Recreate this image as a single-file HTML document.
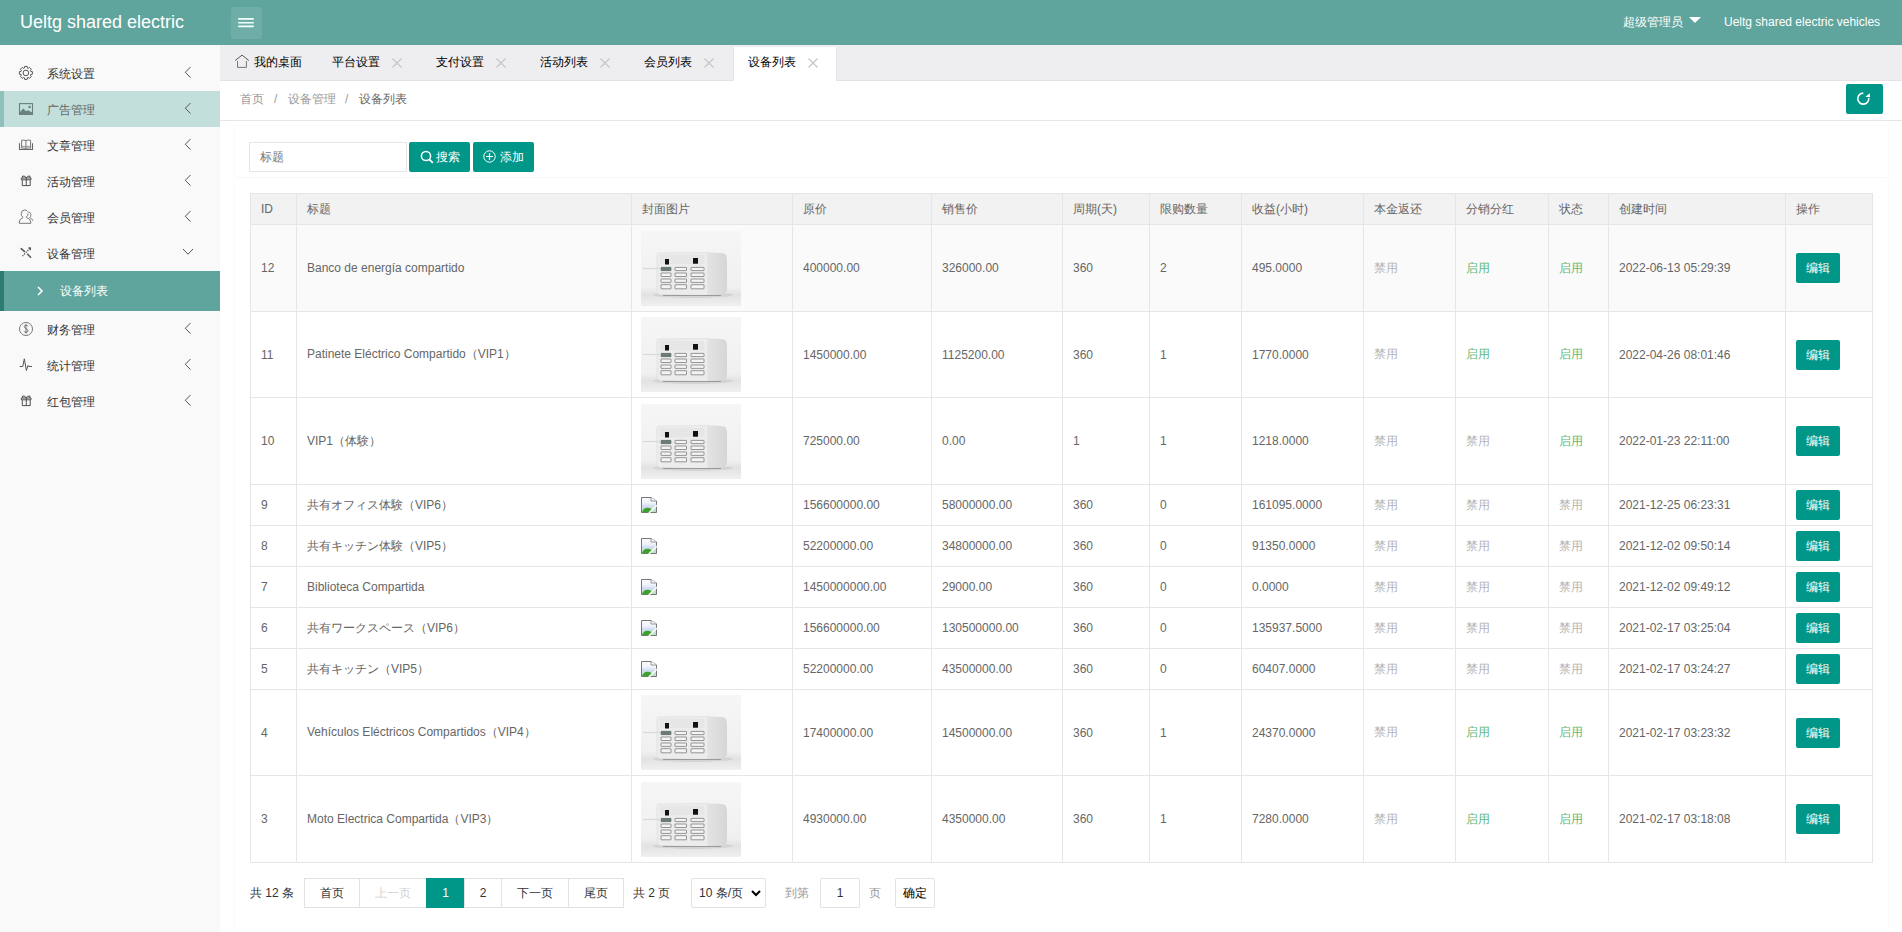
<!DOCTYPE html><html><head><meta charset="utf-8"><title>设备列表</title><style>
*{box-sizing:border-box;margin:0;padding:0}
html,body{width:1902px;height:932px;overflow:hidden;background:#fff;font-family:"Liberation Sans",sans-serif;font-size:12px;color:#666}
.abs{position:absolute}
#hdr{position:absolute;left:0;top:0;width:1902px;height:45px;background:#5fa59d}
#logo{position:absolute;left:20px;top:0;height:45px;line-height:44px;font-size:18px;color:#fff;white-space:nowrap}
#ham{position:absolute;left:231px;top:7px;width:31px;height:32px;background:rgba(255,255,255,.1);border-radius:3px}
#ham i{position:absolute;left:7px;width:16px;height:2px;background:#fff}
#uname{position:absolute;left:1623px;top:0;line-height:44px;color:#fff;font-size:12px;white-space:nowrap}
#caret{position:absolute;left:1689px;top:17px;width:0;height:0;border-left:6px solid transparent;border-right:6px solid transparent;border-top:6px solid #fff}
#site{position:absolute;left:1724px;top:0;line-height:44px;color:#fff;font-size:12px;white-space:nowrap}
#side{position:absolute;left:0;top:45px;width:220px;height:887px;background:#f9f9f9}
.mi{position:absolute;left:0;width:220px;height:36px;line-height:36px;color:#333;font-size:12px}
.mi .t{position:absolute;left:47px;top:1px}
.mi svg.ic{position:absolute;left:16px;top:8px}
.mi .chev{position:absolute;left:182px;top:0}
.mi.hov{background:#c2dfdb;color:#666}
.mi.hov:before{content:"";position:absolute;left:0;top:0;width:4px;height:36px;background:#8ec1bb}
.mi.act{background:#5fa59d;color:#fff;height:40px;line-height:40px}
.mi.act:before{content:"";position:absolute;left:0;top:0;width:4px;height:40px;background:#2e7b72}
#tabs{position:absolute;left:220px;top:45px;width:1682px;height:36px;background:#eeeef1;border-bottom:1px solid #e3e3e6}
.tab{position:absolute;top:2px;height:34px;line-height:30px;color:#000;font-size:12px;white-space:nowrap}
.tab.on{background:#fff;box-shadow:-1px 0 0 #e4e4e8,1px 0 0 #e4e4e8}
.tab .x{position:absolute;top:10.5px}
#bc{position:absolute;left:220px;top:81px;width:1682px;height:40px;background:#fff;border-bottom:1px solid #e6e6e6}
#bc span{position:absolute;top:0;line-height:37px;color:#999;white-space:nowrap}
#refresh{position:absolute;left:1846px;top:84px;width:37px;height:30px;background:#009688;border-radius:2px}
.card{position:absolute;left:235px;width:1653px;background:#fff;box-shadow:0 0 2px rgba(0,0,0,.05)}
#search{position:absolute;left:249px;top:142px;width:158px;height:30px;border:1px solid #e6e6e6;background:#fff}
#search span{position:absolute;left:10px;top:0;line-height:28px;color:#757575}
.btn{position:absolute;top:142px;height:30px;width:61px;background:#009688;border-radius:2px;color:#fff;line-height:30px;white-space:nowrap}
.btn svg{position:absolute;top:8px}
.btn span{position:absolute;top:0}
table#tb{position:absolute;left:250px;top:193px;border-collapse:collapse;table-layout:fixed;width:1623px}
#tb td,#tb th{border:1px solid #e6e6e6;padding:0 0 0 10px;font-weight:normal;text-align:left;color:#666;font-size:12px;white-space:nowrap;overflow:hidden;vertical-align:middle}
#tb th{background:#f2f2f2;height:31px}
#tb tr.hv td{background:#fafafa}
.dis{color:#b4b4b4 !important}
.en{color:#5fb878 !important}
.edit{display:inline-block;width:44px;height:30px;line-height:30px;text-align:center;background:#009688;color:#fff;border-radius:2px;margin-left:0}
#pg{position:absolute;left:250px;top:878px;height:30px;white-space:nowrap}
.pb{position:absolute;top:0;height:30px;line-height:28px;border:1px solid #e2e2e2;background:#fff;color:#333;text-align:center}
.pt{position:absolute;top:0;line-height:30px;color:#333}
</style></head><body>
<div id="hdr"><div id="logo">Ueltg shared electric</div>
<div id="ham"><svg class="abs" style="left:0;top:0" width="31" height="32" viewBox="0 0 31 32"><path d="M7.8 11.9 H22.2 M7.8 15.7 H22.2 M7.8 19.4 H22.2" stroke="#f4fffd" stroke-width="1.6" stroke-linecap="round"/></svg></div>
<div id="uname">超级管理员</div><div id="caret"></div><div id="site">Ueltg shared electric vehicles</div></div>
<div id="side">
<div class="mi " style="top:10px"><svg class="ic" style="top:7px" width="20" height="20" viewBox="0 0 20 20"><path d="M8.31 6.16 L8.64 4.42 L11.16 4.42 L11.49 6.16 L12.13 6.43 L13.59 5.43 L15.37 7.21 L14.37 8.67 L14.64 9.31 L16.38 9.64 L16.38 12.16 L14.64 12.49 L14.37 13.13 L15.37 14.59 L13.59 16.37 L12.13 15.37 L11.49 15.64 L11.16 17.38 L8.64 17.38 L8.31 15.64 L7.67 15.37 L6.21 16.37 L4.43 14.59 L5.43 13.13 L5.16 12.49 L3.42 12.16 L3.42 9.64 L5.16 9.31 L5.43 8.67 L4.43 7.21 L6.21 5.43 L7.67 6.43 Z" fill="none" stroke="#555" stroke-width="1" stroke-linejoin="round"/><circle cx="9.9" cy="10.9" r="2.8" fill="none" stroke="#555" stroke-width="1"/></svg><span class="t">系统设置</span><svg class="chev" width="10" height="36" viewBox="0 0 10 36"><path d="M8.5 12 L3.3 17.3 L8.5 22.6" fill="none" stroke="#555" stroke-width="1"/></svg></div>
<div class="mi hov" style="top:46px"><svg class="ic" width="20" height="20" viewBox="0 0 20 20"><rect x="3.5" y="4.6" width="13" height="10.8" fill="none" stroke="#6b7f7c" stroke-width="1.1"/><path d="M3.5 13.5 L7.3 9.6 L10 12.2 L12 11.2 L16.5 13.8 V15.4 H3.5 Z" fill="#6b7f7c"/><circle cx="13.6" cy="8" r="1.2" fill="#6b7f7c"/></svg><span class="t">广告管理</span><svg class="chev" width="10" height="36" viewBox="0 0 10 36"><path d="M8.5 12 L3.3 17.3 L8.5 22.6" fill="none" stroke="#555" stroke-width="1"/></svg></div>
<div class="mi " style="top:82px"><svg class="ic" width="20" height="20" viewBox="0 0 20 20"><path d="M3.5 8.2 V14.5 H16.5 V8.2" fill="none" stroke="#666" stroke-width="1.1"/><path d="M5.6 13.2 V5.3 Q7.8 4.6 9.9 5.6 V13.4 Q7.8 12.6 5.6 13.2 Z M9.9 5.6 Q12.2 4.6 14.6 5.3 V13.2 Q12.2 12.6 9.9 13.4" fill="none" stroke="#777" stroke-width="1"/><path d="M5.6 11.4 H14.6" stroke="#888" stroke-width="0.8"/></svg><span class="t">文章管理</span><svg class="chev" width="10" height="36" viewBox="0 0 10 36"><path d="M8.5 12 L3.3 17.3 L8.5 22.6" fill="none" stroke="#555" stroke-width="1"/></svg></div>
<div class="mi " style="top:118px"><svg class="ic" width="20" height="20" viewBox="0 0 20 20"><path d="M6.3 9.2 V14.6 H14.2 V9.2 M5.3 7 H15 V8.8 H5.3 Z M10.25 7 V14.6 M10.2 7 Q9.5 4.6 6.6 5 Q6 6.2 7 7 M10.3 7 Q11 4.6 13.9 5 Q14.5 6.2 13.5 7" fill="none" stroke="#444" stroke-width="0.95"/></svg><span class="t">活动管理</span><svg class="chev" width="10" height="36" viewBox="0 0 10 36"><path d="M8.5 12 L3.3 17.3 L8.5 22.6" fill="none" stroke="#555" stroke-width="1"/></svg></div>
<div class="mi " style="top:154px"><svg class="ic" width="20" height="20" viewBox="0 0 20 20"><path d="M7 10.3 Q5 8.8 5.2 6.6 Q5.5 3 8.7 3 Q10.4 3 11.4 4.2 M10 10.3 Q12.2 8.8 12 6.6" fill="none" stroke="#777" stroke-width="1"/><path d="M7 10.5 Q3.3 12 3.3 15.2 V16.3 H14.8 V15.2 Q14.8 12 10.5 10.5" fill="none" stroke="#777" stroke-width="1"/><path d="M11.8 5.2 Q13 4.8 14 5.6 Q15.4 7 14.8 9 Q14.4 10 13.6 10.6 Q16.3 11.5 17 14" fill="none" stroke="#888" stroke-width="1"/></svg><span class="t">会员管理</span><svg class="chev" width="10" height="36" viewBox="0 0 10 36"><path d="M8.5 12 L3.3 17.3 L8.5 22.6" fill="none" stroke="#555" stroke-width="1"/></svg></div>
<div class="mi open" style="top:190px"><svg class="ic" width="20" height="20" viewBox="0 0 20 20"><path d="M5.2 5.6 L8.4 8.4 M11.6 11.2 L14.6 14.2" stroke="#555" stroke-width="1.5" stroke-linecap="round"/><path d="M14 5.2 L6 13.6" stroke="#666" stroke-width="1.3" stroke-dasharray="1.4 1"/><path d="M12.2 5 L14.4 4.8 L14.4 7.2" fill="none" stroke="#555" stroke-width="1.2"/></svg><span class="t">设备管理</span><svg class="chev" width="12" height="36" viewBox="0 0 12 36"><path d="M1 14 L6 19.2 L11 14" fill="none" stroke="#555" stroke-width="1"/></svg></div>
<div class="mi act" style="top:226px"><svg class="abs" style="left:36px;top:15px" width="8" height="10" viewBox="0 0 8 10"><path d="M2 1 L6 5 L2 9" fill="none" stroke="#fff" stroke-width="1.6"/></svg><span class="t" style="left:60px;top:0">设备列表</span></div>
<div class="mi " style="top:266px"><svg class="ic" width="20" height="20" viewBox="0 0 20 20"><circle cx="10" cy="10" r="6.5" fill="none" stroke="#777" stroke-width="1"/><path d="M11.9 7.4 Q11.4 6.2 10 6.2 Q8.2 6.2 8.2 7.6 Q8.2 8.8 10 9.6 Q11.9 10.4 11.9 11.8 Q11.9 13.4 10 13.4 Q8.4 13.4 8 12.2 M10 5.2 V14.6" fill="none" stroke="#666" stroke-width="0.9"/></svg><span class="t">财务管理</span><svg class="chev" width="10" height="36" viewBox="0 0 10 36"><path d="M8.5 12 L3.3 17.3 L8.5 22.6" fill="none" stroke="#555" stroke-width="1"/></svg></div>
<div class="mi " style="top:302px"><svg class="ic" width="20" height="20" viewBox="0 0 20 20"><path d="M3.7 11.5 H6.8 L8.3 3.8 L10.4 15.5 L11.9 10.5 L13 11.5 H16" fill="none" stroke="#555" stroke-width="1" stroke-linejoin="round"/></svg><span class="t">统计管理</span><svg class="chev" width="10" height="36" viewBox="0 0 10 36"><path d="M8.5 12 L3.3 17.3 L8.5 22.6" fill="none" stroke="#555" stroke-width="1"/></svg></div>
<div class="mi " style="top:338px"><svg class="ic" width="20" height="20" viewBox="0 0 20 20"><path d="M6.3 9.2 V14.6 H14.2 V9.2 M5.3 7 H15 V8.8 H5.3 Z M10.25 7 V14.6 M10.2 7 Q9.5 4.6 6.6 5 Q6 6.2 7 7 M10.3 7 Q11 4.6 13.9 5 Q14.5 6.2 13.5 7" fill="none" stroke="#444" stroke-width="0.95"/></svg><span class="t">红包管理</span><svg class="chev" width="10" height="36" viewBox="0 0 10 36"><path d="M8.5 12 L3.3 17.3 L8.5 22.6" fill="none" stroke="#555" stroke-width="1"/></svg></div>
</div>
<div id="tabs">
<div class="tab" style="left:0;width:97px"><svg class="abs" style="left:10px;top:3px" width="30" height="25" viewBox="0 0 30 25"><path d="M5.2 10.5 L12.07 5.1 L18.8 10.5" fill="none" stroke="#555" stroke-width="1"/><path d="M7.5 11 V17.4 H16.4 V11" fill="none" stroke="#777" stroke-width="1"/></svg><span class="abs" style="left:34px;top:0">我的桌面</span></div>
<div class="tab" style="left:97px;width:104px"><span class="abs" style="left:15px;top:0">平台设置</span><svg class="x" style="left:75px" width="10" height="10" viewBox="0 0 10 10"><path d="M0.5 0.5 L9.5 9.5 M9.5 0.5 L0.5 9.5" stroke="#c8c8c8" stroke-width="1.4"/></svg></div>
<div class="tab" style="left:201px;width:104px"><span class="abs" style="left:15px;top:0">支付设置</span><svg class="x" style="left:75px" width="10" height="10" viewBox="0 0 10 10"><path d="M0.5 0.5 L9.5 9.5 M9.5 0.5 L0.5 9.5" stroke="#c8c8c8" stroke-width="1.4"/></svg></div>
<div class="tab" style="left:305px;width:104px"><span class="abs" style="left:15px;top:0">活动列表</span><svg class="x" style="left:75px" width="10" height="10" viewBox="0 0 10 10"><path d="M0.5 0.5 L9.5 9.5 M9.5 0.5 L0.5 9.5" stroke="#c8c8c8" stroke-width="1.4"/></svg></div>
<div class="tab" style="left:409px;width:104px"><span class="abs" style="left:15px;top:0">会员列表</span><svg class="x" style="left:75px" width="10" height="10" viewBox="0 0 10 10"><path d="M0.5 0.5 L9.5 9.5 M9.5 0.5 L0.5 9.5" stroke="#c8c8c8" stroke-width="1.4"/></svg></div>
<div class="tab on" style="left:514px;width:102px"><span class="abs" style="left:14px;top:0">设备列表</span><svg class="x" style="left:74px" width="10" height="10" viewBox="0 0 10 10"><path d="M0.5 0.5 L9.5 9.5 M9.5 0.5 L0.5 9.5" stroke="#c8c8c8" stroke-width="1.4"/></svg></div>
</div>
<div id="bc"><span style="left:20px">首页</span><span style="left:54px">/</span><span style="left:68px">设备管理</span><span style="left:125px">/</span><span style="left:139px;color:#666">设备列表</span></div>
<div id="refresh"><svg class="abs" style="left:0;top:0" width="37" height="30" viewBox="0 0 37 30"><path d="M17.26 9.17 A5.5 5.5 0 1 0 22.7 13.8" fill="none" stroke="#fff" stroke-width="1.6"/><path d="M19.3 12.9 L23.6 9.2 L24.1 12.9 Z" fill="#fff"/></svg></div>
<div class="card" style="top:126px;height:51px"></div>
<div class="card" style="top:178px;height:754px"></div>
<div id="search"><span>标题</span></div>
<div class="btn" style="left:409px"><svg style="left:11px" width="14" height="14" viewBox="0 0 14 14"><circle cx="6" cy="6" r="4.6" fill="none" stroke="#fff" stroke-width="1.5"/><path d="M9.3 9.3 L12.8 12.8" stroke="#fff" stroke-width="1.8"/></svg><span style="left:27px">搜索</span></div>
<div class="btn" style="left:473px"><svg style="left:10px" width="13" height="13" viewBox="0 0 13 13"><circle cx="6.5" cy="6.5" r="5.7" fill="none" stroke="#fff" stroke-width="1"/><path d="M6.5 3 V10 M3 6.5 H10" stroke="#fff" stroke-width="1.2"/></svg><span style="left:27px">添加</span></div>
<table id="tb"><colgroup><col style="width:46px"><col style="width:335px"><col style="width:161px"><col style="width:139px"><col style="width:131px"><col style="width:87px"><col style="width:92px"><col style="width:122px"><col style="width:92px"><col style="width:93px"><col style="width:60px"><col style="width:177px"><col style="width:87px"></colgroup>
<tr><th>ID</th><th>标题</th><th>封面图片</th><th>原价</th><th>销售价</th><th>周期(天)</th><th>限购数量</th><th>收益(小时)</th><th>本金返还</th><th>分销分红</th><th>状态</th><th>创建时间</th><th>操作</th></tr>
<tr class="hv" style="height:87px"><td>12</td><td>Banco de energía compartido</td><td style="padding-left:9px"><svg width="100" height="75" viewBox="0 0 100 75" style="display:block"><defs><linearGradient id="mg" x1="0" y1="0" x2="0" y2="1"><stop offset="0" stop-color="#f6f6f6"/><stop offset="0.75" stop-color="#f0f0f0"/><stop offset="0.85" stop-color="#e2e2e2"/><stop offset="1" stop-color="#f0f0f0"/></linearGradient><linearGradient id="ms" x1="0" y1="0" x2="1" y2="0"><stop offset="0" stop-color="#e4e4e4"/><stop offset="1" stop-color="#d6d6d6"/></linearGradient></defs><rect width="100" height="75" fill="url(#mg)"/><ellipse cx="52" cy="64" rx="40" ry="3" fill="#d0d0d0" opacity="0.8"/><path d="M65 21.5 Q82 21 84 23 Q86 25 86 30 V58 Q86 62 82 63 L65 64 Z" fill="url(#ms)"/><path d="M18 22 Q16 22 16 25 V60 Q16 63 19 63.5 L65 64.5 L67 64 V21.5 Z" fill="#ececec" stroke="#dcdcdc" stroke-width="0.6"/><rect x="19" y="24" width="44" height="9" fill="#e6e6e6"/><rect x="24" y="28" width="4" height="5.5" fill="#111"/><rect x="52" y="27" width="5" height="5.7" fill="#111"/><rect x="20.0" y="36.4" width="10.0" height="3.2" rx="0.3" fill="#f4f4f4" stroke="#7d7d7d" stroke-width="0.8"/><rect x="20.0" y="42.0" width="10.0" height="3.5" rx="0.3" fill="#f4f4f4" stroke="#7d7d7d" stroke-width="0.8"/><rect x="20.0" y="48.0" width="10.0" height="3.4" rx="0.3" fill="#f4f4f4" stroke="#7d7d7d" stroke-width="0.8"/><rect x="20.0" y="53.7" width="10.0" height="4.1" rx="0.3" fill="#f4f4f4" stroke="#7d7d7d" stroke-width="0.8"/><rect x="34.0" y="36.4" width="11.5" height="3.2" rx="0.3" fill="#f4f4f4" stroke="#7d7d7d" stroke-width="0.8"/><rect x="34.0" y="42.0" width="11.5" height="3.5" rx="0.3" fill="#f4f4f4" stroke="#7d7d7d" stroke-width="0.8"/><rect x="34.0" y="48.0" width="11.5" height="3.4" rx="0.3" fill="#f4f4f4" stroke="#7d7d7d" stroke-width="0.8"/><rect x="34.0" y="53.7" width="11.5" height="4.1" rx="0.3" fill="#f4f4f4" stroke="#7d7d7d" stroke-width="0.8"/><rect x="50.0" y="36.4" width="13.0" height="3.2" rx="0.3" fill="#f4f4f4" stroke="#7d7d7d" stroke-width="0.8"/><rect x="50.0" y="42.0" width="13.0" height="3.5" rx="0.3" fill="#f4f4f4" stroke="#7d7d7d" stroke-width="0.8"/><rect x="50.0" y="48.0" width="13.0" height="3.4" rx="0.3" fill="#f4f4f4" stroke="#7d7d7d" stroke-width="0.8"/><rect x="50.0" y="53.7" width="13.0" height="4.1" rx="0.3" fill="#f4f4f4" stroke="#7d7d7d" stroke-width="0.8"/><rect x="20" y="36" width="10" height="4" fill="#6d7b76"/><path d="M2 37.5 H20" stroke="#d9d9d9" stroke-width="1.2"/><path d="M22 64.5 H80" stroke="#9a9a9a" stroke-width="1.2"/></svg></td><td>400000.00</td><td>326000.00</td><td>360</td><td>2</td><td>495.0000</td><td class="dis">禁用</td><td class="en">启用</td><td class="en">启用</td><td>2022-06-13 05:29:39</td><td><span class="edit">编辑</span></td></tr>
<tr style="height:86px"><td>11</td><td>Patinete Eléctrico Compartido（VIP1）</td><td style="padding-left:9px"><svg width="100" height="75" viewBox="0 0 100 75" style="display:block"><defs><linearGradient id="mg" x1="0" y1="0" x2="0" y2="1"><stop offset="0" stop-color="#f6f6f6"/><stop offset="0.75" stop-color="#f0f0f0"/><stop offset="0.85" stop-color="#e2e2e2"/><stop offset="1" stop-color="#f0f0f0"/></linearGradient><linearGradient id="ms" x1="0" y1="0" x2="1" y2="0"><stop offset="0" stop-color="#e4e4e4"/><stop offset="1" stop-color="#d6d6d6"/></linearGradient></defs><rect width="100" height="75" fill="url(#mg)"/><ellipse cx="52" cy="64" rx="40" ry="3" fill="#d0d0d0" opacity="0.8"/><path d="M65 21.5 Q82 21 84 23 Q86 25 86 30 V58 Q86 62 82 63 L65 64 Z" fill="url(#ms)"/><path d="M18 22 Q16 22 16 25 V60 Q16 63 19 63.5 L65 64.5 L67 64 V21.5 Z" fill="#ececec" stroke="#dcdcdc" stroke-width="0.6"/><rect x="19" y="24" width="44" height="9" fill="#e6e6e6"/><rect x="24" y="28" width="4" height="5.5" fill="#111"/><rect x="52" y="27" width="5" height="5.7" fill="#111"/><rect x="20.0" y="36.4" width="10.0" height="3.2" rx="0.3" fill="#f4f4f4" stroke="#7d7d7d" stroke-width="0.8"/><rect x="20.0" y="42.0" width="10.0" height="3.5" rx="0.3" fill="#f4f4f4" stroke="#7d7d7d" stroke-width="0.8"/><rect x="20.0" y="48.0" width="10.0" height="3.4" rx="0.3" fill="#f4f4f4" stroke="#7d7d7d" stroke-width="0.8"/><rect x="20.0" y="53.7" width="10.0" height="4.1" rx="0.3" fill="#f4f4f4" stroke="#7d7d7d" stroke-width="0.8"/><rect x="34.0" y="36.4" width="11.5" height="3.2" rx="0.3" fill="#f4f4f4" stroke="#7d7d7d" stroke-width="0.8"/><rect x="34.0" y="42.0" width="11.5" height="3.5" rx="0.3" fill="#f4f4f4" stroke="#7d7d7d" stroke-width="0.8"/><rect x="34.0" y="48.0" width="11.5" height="3.4" rx="0.3" fill="#f4f4f4" stroke="#7d7d7d" stroke-width="0.8"/><rect x="34.0" y="53.7" width="11.5" height="4.1" rx="0.3" fill="#f4f4f4" stroke="#7d7d7d" stroke-width="0.8"/><rect x="50.0" y="36.4" width="13.0" height="3.2" rx="0.3" fill="#f4f4f4" stroke="#7d7d7d" stroke-width="0.8"/><rect x="50.0" y="42.0" width="13.0" height="3.5" rx="0.3" fill="#f4f4f4" stroke="#7d7d7d" stroke-width="0.8"/><rect x="50.0" y="48.0" width="13.0" height="3.4" rx="0.3" fill="#f4f4f4" stroke="#7d7d7d" stroke-width="0.8"/><rect x="50.0" y="53.7" width="13.0" height="4.1" rx="0.3" fill="#f4f4f4" stroke="#7d7d7d" stroke-width="0.8"/><rect x="20" y="36" width="10" height="4" fill="#6d7b76"/><path d="M2 37.5 H20" stroke="#d9d9d9" stroke-width="1.2"/><path d="M22 64.5 H80" stroke="#9a9a9a" stroke-width="1.2"/></svg></td><td>1450000.00</td><td>1125200.00</td><td>360</td><td>1</td><td>1770.0000</td><td class="dis">禁用</td><td class="en">启用</td><td class="en">启用</td><td>2022-04-26 08:01:46</td><td><span class="edit">编辑</span></td></tr>
<tr style="height:87px"><td>10</td><td>VIP1（体験）</td><td style="padding-left:9px"><svg width="100" height="75" viewBox="0 0 100 75" style="display:block"><defs><linearGradient id="mg" x1="0" y1="0" x2="0" y2="1"><stop offset="0" stop-color="#f6f6f6"/><stop offset="0.75" stop-color="#f0f0f0"/><stop offset="0.85" stop-color="#e2e2e2"/><stop offset="1" stop-color="#f0f0f0"/></linearGradient><linearGradient id="ms" x1="0" y1="0" x2="1" y2="0"><stop offset="0" stop-color="#e4e4e4"/><stop offset="1" stop-color="#d6d6d6"/></linearGradient></defs><rect width="100" height="75" fill="url(#mg)"/><ellipse cx="52" cy="64" rx="40" ry="3" fill="#d0d0d0" opacity="0.8"/><path d="M65 21.5 Q82 21 84 23 Q86 25 86 30 V58 Q86 62 82 63 L65 64 Z" fill="url(#ms)"/><path d="M18 22 Q16 22 16 25 V60 Q16 63 19 63.5 L65 64.5 L67 64 V21.5 Z" fill="#ececec" stroke="#dcdcdc" stroke-width="0.6"/><rect x="19" y="24" width="44" height="9" fill="#e6e6e6"/><rect x="24" y="28" width="4" height="5.5" fill="#111"/><rect x="52" y="27" width="5" height="5.7" fill="#111"/><rect x="20.0" y="36.4" width="10.0" height="3.2" rx="0.3" fill="#f4f4f4" stroke="#7d7d7d" stroke-width="0.8"/><rect x="20.0" y="42.0" width="10.0" height="3.5" rx="0.3" fill="#f4f4f4" stroke="#7d7d7d" stroke-width="0.8"/><rect x="20.0" y="48.0" width="10.0" height="3.4" rx="0.3" fill="#f4f4f4" stroke="#7d7d7d" stroke-width="0.8"/><rect x="20.0" y="53.7" width="10.0" height="4.1" rx="0.3" fill="#f4f4f4" stroke="#7d7d7d" stroke-width="0.8"/><rect x="34.0" y="36.4" width="11.5" height="3.2" rx="0.3" fill="#f4f4f4" stroke="#7d7d7d" stroke-width="0.8"/><rect x="34.0" y="42.0" width="11.5" height="3.5" rx="0.3" fill="#f4f4f4" stroke="#7d7d7d" stroke-width="0.8"/><rect x="34.0" y="48.0" width="11.5" height="3.4" rx="0.3" fill="#f4f4f4" stroke="#7d7d7d" stroke-width="0.8"/><rect x="34.0" y="53.7" width="11.5" height="4.1" rx="0.3" fill="#f4f4f4" stroke="#7d7d7d" stroke-width="0.8"/><rect x="50.0" y="36.4" width="13.0" height="3.2" rx="0.3" fill="#f4f4f4" stroke="#7d7d7d" stroke-width="0.8"/><rect x="50.0" y="42.0" width="13.0" height="3.5" rx="0.3" fill="#f4f4f4" stroke="#7d7d7d" stroke-width="0.8"/><rect x="50.0" y="48.0" width="13.0" height="3.4" rx="0.3" fill="#f4f4f4" stroke="#7d7d7d" stroke-width="0.8"/><rect x="50.0" y="53.7" width="13.0" height="4.1" rx="0.3" fill="#f4f4f4" stroke="#7d7d7d" stroke-width="0.8"/><rect x="20" y="36" width="10" height="4" fill="#6d7b76"/><path d="M2 37.5 H20" stroke="#d9d9d9" stroke-width="1.2"/><path d="M22 64.5 H80" stroke="#9a9a9a" stroke-width="1.2"/></svg></td><td>725000.00</td><td>0.00</td><td>1</td><td>1</td><td>1218.0000</td><td class="dis">禁用</td><td class="dis">禁用</td><td class="en">启用</td><td>2022-01-23 22:11:00</td><td><span class="edit">编辑</span></td></tr>
<tr style="height:41px"><td>9</td><td>共有オフィス体験（VIP6）</td><td style="padding-left:9px"><svg width="16" height="16" viewBox="0 0 16 16" style="display:block"><defs><linearGradient id="bgr" x1="0" y1="0" x2="0" y2="1"><stop offset="0" stop-color="#fbfbff"/><stop offset="0.35" stop-color="#f2f4fb"/><stop offset="0.6" stop-color="#cfdcf2"/><stop offset="1" stop-color="#b9e0c0"/></linearGradient></defs><path d="M0.5 0.5 H10 L15.5 4 V15.5 H0.5 Z" fill="url(#bgr)" stroke="#777" stroke-width="1"/><path d="M10 0.5 V4 H15.5" fill="#fff" stroke="#888" stroke-width="0.9"/><path d="M1 15.2 Q2.5 10 7.5 10.8 Q10 11.3 11 12.5 L8.5 15.2 Z" fill="#3fa02e"/><path d="M7.8 16 L16 8.2" stroke="#f2fff0" stroke-width="1.6"/></svg></td><td>156600000.00</td><td>58000000.00</td><td>360</td><td>0</td><td>161095.0000</td><td class="dis">禁用</td><td class="dis">禁用</td><td class="dis">禁用</td><td>2021-12-25 06:23:31</td><td><span class="edit">编辑</span></td></tr>
<tr style="height:41px"><td>8</td><td>共有キッチン体験（VIP5）</td><td style="padding-left:9px"><svg width="16" height="16" viewBox="0 0 16 16" style="display:block"><defs><linearGradient id="bgr" x1="0" y1="0" x2="0" y2="1"><stop offset="0" stop-color="#fbfbff"/><stop offset="0.35" stop-color="#f2f4fb"/><stop offset="0.6" stop-color="#cfdcf2"/><stop offset="1" stop-color="#b9e0c0"/></linearGradient></defs><path d="M0.5 0.5 H10 L15.5 4 V15.5 H0.5 Z" fill="url(#bgr)" stroke="#777" stroke-width="1"/><path d="M10 0.5 V4 H15.5" fill="#fff" stroke="#888" stroke-width="0.9"/><path d="M1 15.2 Q2.5 10 7.5 10.8 Q10 11.3 11 12.5 L8.5 15.2 Z" fill="#3fa02e"/><path d="M7.8 16 L16 8.2" stroke="#f2fff0" stroke-width="1.6"/></svg></td><td>52200000.00</td><td>34800000.00</td><td>360</td><td>0</td><td>91350.0000</td><td class="dis">禁用</td><td class="dis">禁用</td><td class="dis">禁用</td><td>2021-12-02 09:50:14</td><td><span class="edit">编辑</span></td></tr>
<tr style="height:41px"><td>7</td><td>Biblioteca Compartida</td><td style="padding-left:9px"><svg width="16" height="16" viewBox="0 0 16 16" style="display:block"><defs><linearGradient id="bgr" x1="0" y1="0" x2="0" y2="1"><stop offset="0" stop-color="#fbfbff"/><stop offset="0.35" stop-color="#f2f4fb"/><stop offset="0.6" stop-color="#cfdcf2"/><stop offset="1" stop-color="#b9e0c0"/></linearGradient></defs><path d="M0.5 0.5 H10 L15.5 4 V15.5 H0.5 Z" fill="url(#bgr)" stroke="#777" stroke-width="1"/><path d="M10 0.5 V4 H15.5" fill="#fff" stroke="#888" stroke-width="0.9"/><path d="M1 15.2 Q2.5 10 7.5 10.8 Q10 11.3 11 12.5 L8.5 15.2 Z" fill="#3fa02e"/><path d="M7.8 16 L16 8.2" stroke="#f2fff0" stroke-width="1.6"/></svg></td><td>1450000000.00</td><td>29000.00</td><td>360</td><td>0</td><td>0.0000</td><td class="dis">禁用</td><td class="dis">禁用</td><td class="dis">禁用</td><td>2021-12-02 09:49:12</td><td><span class="edit">编辑</span></td></tr>
<tr style="height:41px"><td>6</td><td>共有ワークスペース（VIP6）</td><td style="padding-left:9px"><svg width="16" height="16" viewBox="0 0 16 16" style="display:block"><defs><linearGradient id="bgr" x1="0" y1="0" x2="0" y2="1"><stop offset="0" stop-color="#fbfbff"/><stop offset="0.35" stop-color="#f2f4fb"/><stop offset="0.6" stop-color="#cfdcf2"/><stop offset="1" stop-color="#b9e0c0"/></linearGradient></defs><path d="M0.5 0.5 H10 L15.5 4 V15.5 H0.5 Z" fill="url(#bgr)" stroke="#777" stroke-width="1"/><path d="M10 0.5 V4 H15.5" fill="#fff" stroke="#888" stroke-width="0.9"/><path d="M1 15.2 Q2.5 10 7.5 10.8 Q10 11.3 11 12.5 L8.5 15.2 Z" fill="#3fa02e"/><path d="M7.8 16 L16 8.2" stroke="#f2fff0" stroke-width="1.6"/></svg></td><td>156600000.00</td><td>130500000.00</td><td>360</td><td>0</td><td>135937.5000</td><td class="dis">禁用</td><td class="dis">禁用</td><td class="dis">禁用</td><td>2021-02-17 03:25:04</td><td><span class="edit">编辑</span></td></tr>
<tr style="height:41px"><td>5</td><td>共有キッチン（VIP5）</td><td style="padding-left:9px"><svg width="16" height="16" viewBox="0 0 16 16" style="display:block"><defs><linearGradient id="bgr" x1="0" y1="0" x2="0" y2="1"><stop offset="0" stop-color="#fbfbff"/><stop offset="0.35" stop-color="#f2f4fb"/><stop offset="0.6" stop-color="#cfdcf2"/><stop offset="1" stop-color="#b9e0c0"/></linearGradient></defs><path d="M0.5 0.5 H10 L15.5 4 V15.5 H0.5 Z" fill="url(#bgr)" stroke="#777" stroke-width="1"/><path d="M10 0.5 V4 H15.5" fill="#fff" stroke="#888" stroke-width="0.9"/><path d="M1 15.2 Q2.5 10 7.5 10.8 Q10 11.3 11 12.5 L8.5 15.2 Z" fill="#3fa02e"/><path d="M7.8 16 L16 8.2" stroke="#f2fff0" stroke-width="1.6"/></svg></td><td>52200000.00</td><td>43500000.00</td><td>360</td><td>0</td><td>60407.0000</td><td class="dis">禁用</td><td class="dis">禁用</td><td class="dis">禁用</td><td>2021-02-17 03:24:27</td><td><span class="edit">编辑</span></td></tr>
<tr style="height:86px"><td>4</td><td>Vehículos Eléctricos Compartidos（VIP4）</td><td style="padding-left:9px"><svg width="100" height="75" viewBox="0 0 100 75" style="display:block"><defs><linearGradient id="mg" x1="0" y1="0" x2="0" y2="1"><stop offset="0" stop-color="#f6f6f6"/><stop offset="0.75" stop-color="#f0f0f0"/><stop offset="0.85" stop-color="#e2e2e2"/><stop offset="1" stop-color="#f0f0f0"/></linearGradient><linearGradient id="ms" x1="0" y1="0" x2="1" y2="0"><stop offset="0" stop-color="#e4e4e4"/><stop offset="1" stop-color="#d6d6d6"/></linearGradient></defs><rect width="100" height="75" fill="url(#mg)"/><ellipse cx="52" cy="64" rx="40" ry="3" fill="#d0d0d0" opacity="0.8"/><path d="M65 21.5 Q82 21 84 23 Q86 25 86 30 V58 Q86 62 82 63 L65 64 Z" fill="url(#ms)"/><path d="M18 22 Q16 22 16 25 V60 Q16 63 19 63.5 L65 64.5 L67 64 V21.5 Z" fill="#ececec" stroke="#dcdcdc" stroke-width="0.6"/><rect x="19" y="24" width="44" height="9" fill="#e6e6e6"/><rect x="24" y="28" width="4" height="5.5" fill="#111"/><rect x="52" y="27" width="5" height="5.7" fill="#111"/><rect x="20.0" y="36.4" width="10.0" height="3.2" rx="0.3" fill="#f4f4f4" stroke="#7d7d7d" stroke-width="0.8"/><rect x="20.0" y="42.0" width="10.0" height="3.5" rx="0.3" fill="#f4f4f4" stroke="#7d7d7d" stroke-width="0.8"/><rect x="20.0" y="48.0" width="10.0" height="3.4" rx="0.3" fill="#f4f4f4" stroke="#7d7d7d" stroke-width="0.8"/><rect x="20.0" y="53.7" width="10.0" height="4.1" rx="0.3" fill="#f4f4f4" stroke="#7d7d7d" stroke-width="0.8"/><rect x="34.0" y="36.4" width="11.5" height="3.2" rx="0.3" fill="#f4f4f4" stroke="#7d7d7d" stroke-width="0.8"/><rect x="34.0" y="42.0" width="11.5" height="3.5" rx="0.3" fill="#f4f4f4" stroke="#7d7d7d" stroke-width="0.8"/><rect x="34.0" y="48.0" width="11.5" height="3.4" rx="0.3" fill="#f4f4f4" stroke="#7d7d7d" stroke-width="0.8"/><rect x="34.0" y="53.7" width="11.5" height="4.1" rx="0.3" fill="#f4f4f4" stroke="#7d7d7d" stroke-width="0.8"/><rect x="50.0" y="36.4" width="13.0" height="3.2" rx="0.3" fill="#f4f4f4" stroke="#7d7d7d" stroke-width="0.8"/><rect x="50.0" y="42.0" width="13.0" height="3.5" rx="0.3" fill="#f4f4f4" stroke="#7d7d7d" stroke-width="0.8"/><rect x="50.0" y="48.0" width="13.0" height="3.4" rx="0.3" fill="#f4f4f4" stroke="#7d7d7d" stroke-width="0.8"/><rect x="50.0" y="53.7" width="13.0" height="4.1" rx="0.3" fill="#f4f4f4" stroke="#7d7d7d" stroke-width="0.8"/><rect x="20" y="36" width="10" height="4" fill="#6d7b76"/><path d="M2 37.5 H20" stroke="#d9d9d9" stroke-width="1.2"/><path d="M22 64.5 H80" stroke="#9a9a9a" stroke-width="1.2"/></svg></td><td>17400000.00</td><td>14500000.00</td><td>360</td><td>1</td><td>24370.0000</td><td class="dis">禁用</td><td class="en">启用</td><td class="en">启用</td><td>2021-02-17 03:23:32</td><td><span class="edit">编辑</span></td></tr>
<tr style="height:87px"><td>3</td><td>Moto Electrica Compartida（VIP3）</td><td style="padding-left:9px"><svg width="100" height="75" viewBox="0 0 100 75" style="display:block"><defs><linearGradient id="mg" x1="0" y1="0" x2="0" y2="1"><stop offset="0" stop-color="#f6f6f6"/><stop offset="0.75" stop-color="#f0f0f0"/><stop offset="0.85" stop-color="#e2e2e2"/><stop offset="1" stop-color="#f0f0f0"/></linearGradient><linearGradient id="ms" x1="0" y1="0" x2="1" y2="0"><stop offset="0" stop-color="#e4e4e4"/><stop offset="1" stop-color="#d6d6d6"/></linearGradient></defs><rect width="100" height="75" fill="url(#mg)"/><ellipse cx="52" cy="64" rx="40" ry="3" fill="#d0d0d0" opacity="0.8"/><path d="M65 21.5 Q82 21 84 23 Q86 25 86 30 V58 Q86 62 82 63 L65 64 Z" fill="url(#ms)"/><path d="M18 22 Q16 22 16 25 V60 Q16 63 19 63.5 L65 64.5 L67 64 V21.5 Z" fill="#ececec" stroke="#dcdcdc" stroke-width="0.6"/><rect x="19" y="24" width="44" height="9" fill="#e6e6e6"/><rect x="24" y="28" width="4" height="5.5" fill="#111"/><rect x="52" y="27" width="5" height="5.7" fill="#111"/><rect x="20.0" y="36.4" width="10.0" height="3.2" rx="0.3" fill="#f4f4f4" stroke="#7d7d7d" stroke-width="0.8"/><rect x="20.0" y="42.0" width="10.0" height="3.5" rx="0.3" fill="#f4f4f4" stroke="#7d7d7d" stroke-width="0.8"/><rect x="20.0" y="48.0" width="10.0" height="3.4" rx="0.3" fill="#f4f4f4" stroke="#7d7d7d" stroke-width="0.8"/><rect x="20.0" y="53.7" width="10.0" height="4.1" rx="0.3" fill="#f4f4f4" stroke="#7d7d7d" stroke-width="0.8"/><rect x="34.0" y="36.4" width="11.5" height="3.2" rx="0.3" fill="#f4f4f4" stroke="#7d7d7d" stroke-width="0.8"/><rect x="34.0" y="42.0" width="11.5" height="3.5" rx="0.3" fill="#f4f4f4" stroke="#7d7d7d" stroke-width="0.8"/><rect x="34.0" y="48.0" width="11.5" height="3.4" rx="0.3" fill="#f4f4f4" stroke="#7d7d7d" stroke-width="0.8"/><rect x="34.0" y="53.7" width="11.5" height="4.1" rx="0.3" fill="#f4f4f4" stroke="#7d7d7d" stroke-width="0.8"/><rect x="50.0" y="36.4" width="13.0" height="3.2" rx="0.3" fill="#f4f4f4" stroke="#7d7d7d" stroke-width="0.8"/><rect x="50.0" y="42.0" width="13.0" height="3.5" rx="0.3" fill="#f4f4f4" stroke="#7d7d7d" stroke-width="0.8"/><rect x="50.0" y="48.0" width="13.0" height="3.4" rx="0.3" fill="#f4f4f4" stroke="#7d7d7d" stroke-width="0.8"/><rect x="50.0" y="53.7" width="13.0" height="4.1" rx="0.3" fill="#f4f4f4" stroke="#7d7d7d" stroke-width="0.8"/><rect x="20" y="36" width="10" height="4" fill="#6d7b76"/><path d="M2 37.5 H20" stroke="#d9d9d9" stroke-width="1.2"/><path d="M22 64.5 H80" stroke="#9a9a9a" stroke-width="1.2"/></svg></td><td>4930000.00</td><td>4350000.00</td><td>360</td><td>1</td><td>7280.0000</td><td class="dis">禁用</td><td class="en">启用</td><td class="en">启用</td><td>2021-02-17 03:18:08</td><td><span class="edit">编辑</span></td></tr>
</table>
<div id="pg">
<span class="pt" style="left:0">共 12 条</span>
<span class="pb" style="left:54px;width:56px;color:#333;">首页</span>
<span class="pb" style="left:109px;width:68px;color:#d2d2d2;">上一页</span>
<span class="pb" style="left:176px;width:39px;color:#fff;background:#009688;border-color:#009688;">1</span>
<span class="pb" style="left:214px;width:38px;color:#333;">2</span>
<span class="pb" style="left:251px;width:68px;color:#333;">下一页</span>
<span class="pb" style="left:318px;width:56px;color:#333;">尾页</span>
<span class="pt" style="left:383px">共 2 页</span>
<span class="pb" style="left:441px;width:75px;text-align:left;padding-left:7px;border-radius:2px">10 条/页<svg class="abs" style="left:59px;top:11px" width="10" height="7" viewBox="0 0 10 7"><path d="M1 1 L5 5 L9 1" fill="none" stroke="#000" stroke-width="2"/></svg></span>
<span class="pt" style="left:535px;color:#999">到第</span>
<span class="pb" style="left:570px;width:40px;border-radius:2px">1</span>
<span class="pt" style="left:619px;color:#999">页</span>
<span class="pb" style="left:645px;width:40px;border-radius:2px;color:#000">确定</span>
</div>
</body></html>
